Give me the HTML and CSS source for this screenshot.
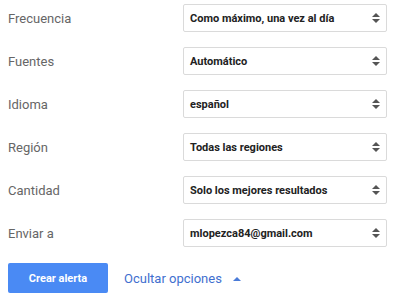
FILE: index.html
```html
<!DOCTYPE html>
<html lang="es">
<head>
    <meta charset="UTF-8">
    <meta name="viewport" content="width=device-width, initial-scale=1.0">
    <title>Opciones de alerta</title>
    <link rel="stylesheet" href="styles.css">
</head>
<body>
    <div class="options">
        <div class="row">
            <label class="label">Frecuencia</label>
            <div class="select">
                <span class="value">Como máximo, una vez al día</span>
                <svg class="arrows" width="8" height="10" viewBox="0 0 8 10"><path d="M0 4 L4 0 L8 4 Z M0 6 L8 6 L4 10 Z" fill="#555"/></svg>
            </div>
        </div>
        <div class="row">
            <label class="label">Fuentes</label>
            <div class="select">
                <span class="value">Automático</span>
                <svg class="arrows" width="8" height="10" viewBox="0 0 8 10"><path d="M0 4 L4 0 L8 4 Z M0 6 L8 6 L4 10 Z" fill="#555"/></svg>
            </div>
        </div>
        <div class="row">
            <label class="label">Idioma</label>
            <div class="select">
                <span class="value">español</span>
                <svg class="arrows" width="8" height="10" viewBox="0 0 8 10"><path d="M0 4 L4 0 L8 4 Z M0 6 L8 6 L4 10 Z" fill="#555"/></svg>
            </div>
        </div>
        <div class="row">
            <label class="label">Región</label>
            <div class="select">
                <span class="value">Todas las regiones</span>
                <svg class="arrows" width="8" height="10" viewBox="0 0 8 10"><path d="M0 4 L4 0 L8 4 Z M0 6 L8 6 L4 10 Z" fill="#555"/></svg>
            </div>
        </div>
        <div class="row">
            <label class="label">Cantidad</label>
            <div class="select">
                <span class="value">Solo los mejores resultados</span>
                <svg class="arrows" width="8" height="10" viewBox="0 0 8 10"><path d="M0 4 L4 0 L8 4 Z M0 6 L8 6 L4 10 Z" fill="#555"/></svg>
            </div>
        </div>
        <div class="row">
            <label class="label">Enviar a</label>
            <div class="select">
                <span class="value">mlopezca84@gmail.com</span>
                <svg class="arrows" width="8" height="10" viewBox="0 0 8 10"><path d="M0 4 L4 0 L8 4 Z M0 6 L8 6 L4 10 Z" fill="#555"/></svg>
            </div>
        </div>

        <div class="actions">
            <button class="create">Crear alerta</button>
            <a class="toggle" href="#">Ocultar opciones <span class="caret"></span></a>
        </div>
    </div>
</body>
</html>
```

FILE: styles.css
```css
body {
    margin: 0;
    background: #ffffff;
    font-family: Roboto, "Liberation Sans", Arial, sans-serif;
}

.options {
    padding: 4px 0 0 8px;
}

.row {
    display: flex;
    align-items: center;
    margin-bottom: 15px;
}

.label {
    width: 175px;
    font-size: 13px;
    color: #666;
}

.select {
    width: 204px;
    height: 28px;
    box-sizing: border-box;
    border: 1px solid #dadada;
    border-radius: 2px;
    display: flex;
    align-items: center;
    padding: 0 6px 0 6px;
}

.value {
    flex: 1;
    font-size: 11px;
    font-weight: bold;
    color: #222;
}

.arrows {
    display: block;
}

.actions {
    display: flex;
    align-items: center;
    margin-top: 16px;
}

.create {
    width: 100px;
    height: 30px;
    border: none;
    border-radius: 2px;
    background: #4a8af4;
    color: #fff;
    font-family: inherit;
    font-size: 11px;
    font-weight: bold;
    cursor: pointer;
}

.toggle {
    margin-left: 16px;
    font-size: 13px;
    color: #3f6fcf;
    text-decoration: none;
}

.caret {
    display: inline-block;
    margin-left: 8px;
    vertical-align: 2px;
    border-left: 4px solid transparent;
    border-right: 4px solid transparent;
    border-bottom: 4px solid #4a7bd8;
}
```
